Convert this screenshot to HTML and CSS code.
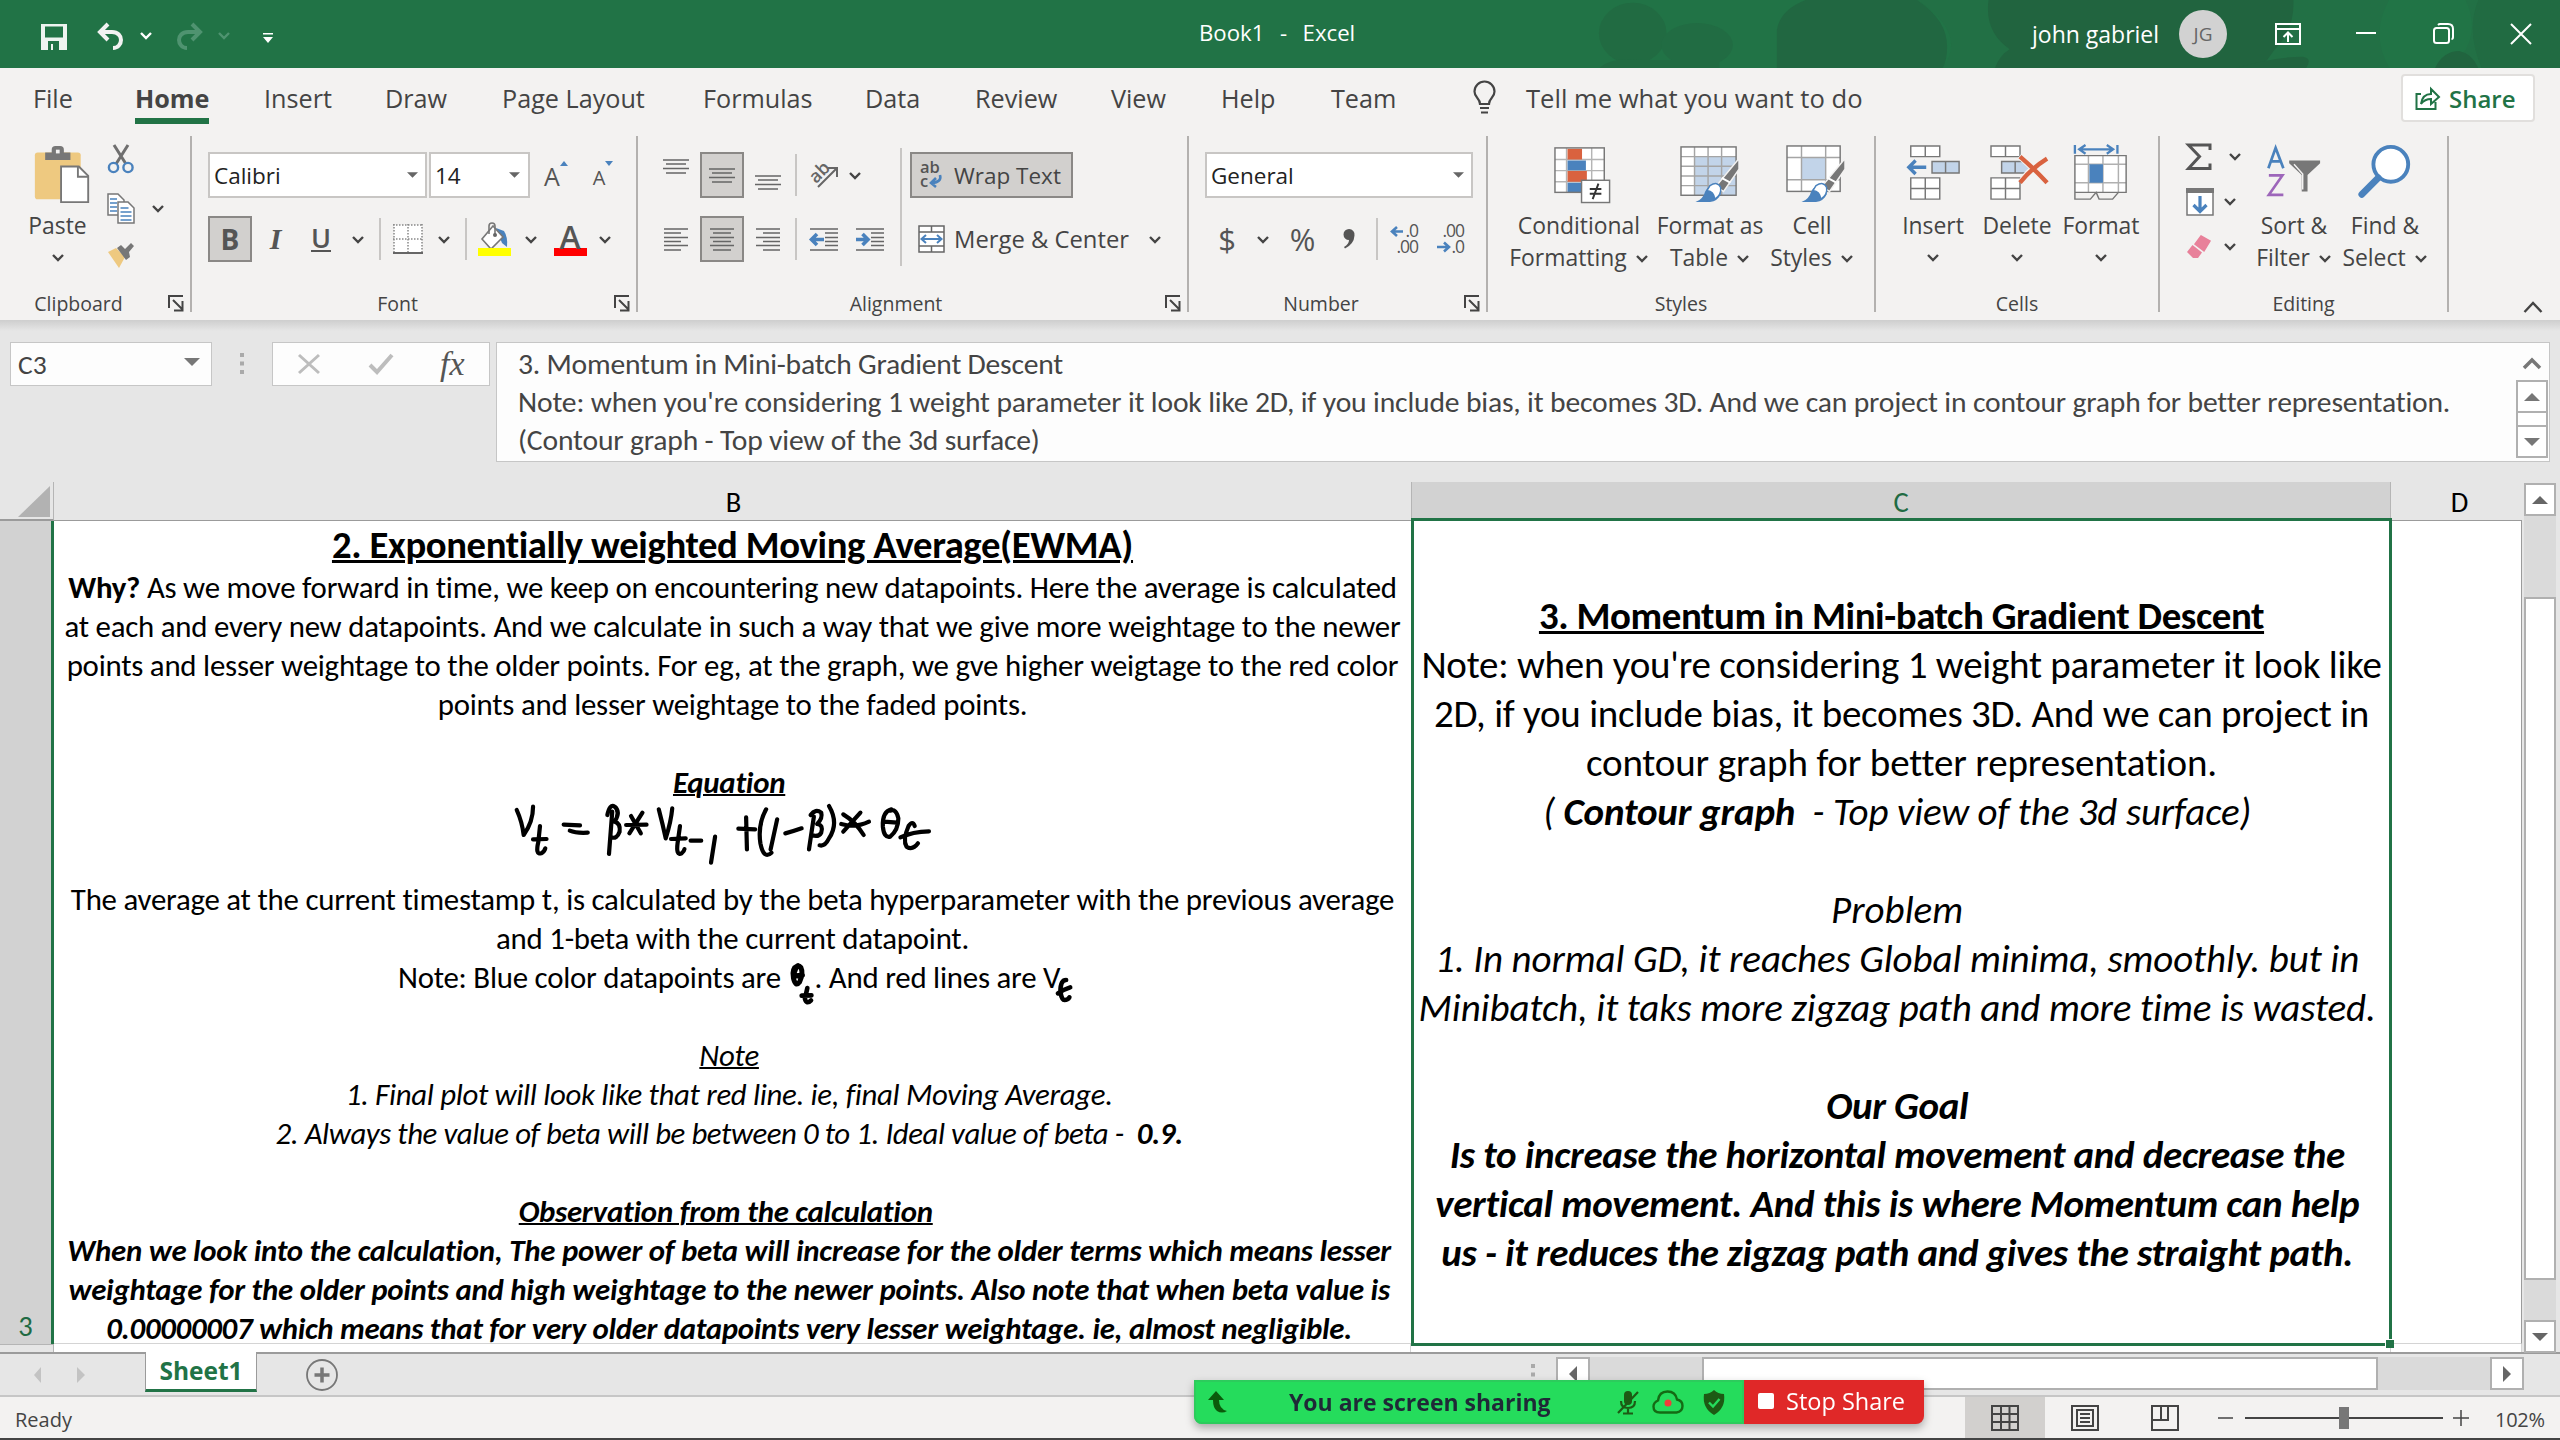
FILE: index.html
```html
<!DOCTYPE html>
<html lang="en">
<head>
<meta charset="utf-8">
<title>Book1 - Excel</title>
<link rel="stylesheet" href="styles.css">
</head>
<body>
<svg class="defs" width="0" height="0" aria-hidden="true">
  <symbol id="chev" viewBox="0 0 14 9"><path d="M2 2l5 5 5-5" fill="none" stroke="currentColor" stroke-width="2.4"/></symbol>
  <symbol id="launch" viewBox="0 0 17 17"><path d="M1 13V1h14M5 5l9 9M14.500 6v9.500H6" fill="none" stroke="#444" stroke-width="2"/></symbol>
  <symbol id="tri" viewBox="0 0 12 6"><path d="M0 0h12l-6 6z" fill="#666"/></symbol>
</svg>

<header class="titlebar">
  <svg class="pattern" viewBox="0 0 1568 204" preserveAspectRatio="none">
    <rect width="1568" height="204" fill="#217346"/>
    <path d="M560 0H1568V204H600Q640 100 560 0z" fill="#227045"/>
    <ellipse cx="114" cy="100" rx="53" ry="92" fill="#216b42"/>
    <ellipse cx="215" cy="135" rx="56" ry="66" fill="#216c43"/>
    <path d="M62 204Q80 170 130 180H250V204z" fill="#216b42"/>
    <path d="M385 0H560Q607 60 607 140Q607 180 600 204H340V90Q345 30 385 0z" fill="#216741"/>
    <path d="M672 0H1150Q1152 90 1120 150L1100 204H682Q690 165 705 148Q665 95 672 0z" fill="#21643f"/>
    <path d="M1060 204Q1120 170 1165 170Q1180 175 1170 204z" fill="#21643f"/>
    <path d="M1300 0H1420Q1440 80 1420 150L1395 204H1300Q1270 100 1300 0z" fill="#217446"/>
    <path d="M1372 204Q1385 153 1410 153Q1430 160 1440 204z" fill="#21643f"/>
    <path d="M1440 0H1568V204H1445Q1420 90 1440 0z" fill="#216b42"/>
  </svg>
  <svg class="qat-save" width="26" height="26" viewBox="0 0 26 26"><path d="M0 0h26v26H0zM4 2.500v11h18v-11zM7 17v9h3v-6h2v6h6v-9z" fill="#eef4f0" fill-rule="evenodd"/></svg>
  <svg class="qat-undo" width="28" height="28" viewBox="0 0 28 28"><path d="M11 2L3 10l8 8M4 10h11c6 0 9 4 9 8s-3 8-8 8" fill="none" stroke="#f2f2f2" stroke-width="4"/></svg>
  <svg class="qat-chev" width="14" height="9"><use href="#chev"/></svg>
  <svg class="qat-redo" width="28" height="28" viewBox="0 0 28 28"><path d="M17 2l8 8-8 8M24 10H13c-6 0-9 4-9 8s3 8 8 8" fill="none" stroke="#4f9370" stroke-width="4"/></svg>
  <svg class="qat-chev dim" width="14" height="9"><use href="#chev"/></svg>
  <svg class="qat-more" width="10" height="10" viewBox="0 0 10 10"><path d="M0 0h10v1.500H0zM0 4h10l-5 6z" fill="#fff"/></svg>
  <div class="doc-title">Book1 &nbsp;-&nbsp; Excel</div>
  <div class="account">john gabriel</div>
  <div class="avatar">JG</div>
  <div class="winbtns">
    <svg width="26" height="22" viewBox="0 0 26 22"><path d="M1 1h24v20H1zM1 6h24M13 19v-9M8.500 14l4.500-4.500 4.500 4.500" fill="none" stroke="#fff" stroke-width="2"/></svg>
    <svg width="20" height="22" viewBox="0 0 20 22"><path d="M0 10h20" stroke="#fff" stroke-width="2"/></svg>
    <svg width="21" height="22" viewBox="0 0 21 22"><rect x="1" y="5" width="15" height="15" rx="2.500" fill="none" stroke="#fff" stroke-width="2"/><path d="M5 2Q6 1 7 1h8q5 0 5 5v8q0 2-1.500 2" fill="none" stroke="#fff" stroke-width="2"/></svg>
    <svg width="20" height="22" viewBox="0 0 20 22"><path d="M0 1l20 20M20 1L0 21" stroke="#fff" stroke-width="2"/></svg>
  </div>
</header>

<section class="ribbon">
  <nav class="tabs">
    <span class="tab w102">File</span><span class="tab active w129"><b>Home</b></span><span class="tab w121">Insert</span><span class="tab w117">Draw</span><span class="tab w201">Page Layout</span><span class="tab w162">Formulas</span><span class="tab w110">Data</span><span class="tab w136">Review</span><span class="tab w110">View</span><span class="tab w110">Help</span><span class="tab w142">Team</span>
    <svg class="w53" height="34" viewBox="0 0 53 34"><path d="M7 23C7 17 1.500 17 1.500 10.500a10 10 0 0 1 20 0C21.500 17 16 17 16 23zM7 27h9M8 31.500h7" fill="none" stroke="#444" stroke-width="2.200"/></svg>
    <span class="tab tell">Tell me what you want to do</span>
    <button class="share"><svg width="25" height="25" viewBox="0 0 25 25"><path d="M6 8H1.500v15h19v-7M6 18c1-7 5-10 10-10V3l8 8-8 7v-5c-4 0-7 1-10 5z" fill="none" stroke="#217346" stroke-width="2"/></svg>Share</button>
  </nav>

  <div class="groups">
    <div class="group g-clip">
      <div class="body">
        <div class="big paste">
          <svg width="58" height="62" viewBox="0 0 58 62"><rect x="0" y="8" width="49" height="50" rx="3" fill="#eec980"/><path d="M11 8h7V5q0-4 4-4h5q4 0 4 4v3h7v8H11z" fill="#777"/><rect x="22.500" y="5" width="4" height="4" fill="#f3f2f1"/><path d="M28 23h19l10 10v28H28z" fill="#fff" stroke="#777" stroke-width="2"/><path d="M46 23v11h11" fill="none" stroke="#777" stroke-width="2"/></svg>
          <span>Paste</span><svg class="chev" width="14" height="9"><use href="#chev"/></svg>
        </div>
        <div class="smalls">
          <svg width="28" height="30" viewBox="0 0 28 30"><path d="M7 1l12 19M21 1L9 20" stroke="#6f6f6f" stroke-width="3"/><circle cx="6.500" cy="23.500" r="4.600" fill="none" stroke="#4a82bd" stroke-width="2.400"/><circle cx="21" cy="23.500" r="4.600" fill="none" stroke="#4a82bd" stroke-width="2.400"/></svg>
          <svg width="28" height="31" viewBox="0 0 28 31"><path d="M1 1h10l6 6v15H1z" fill="#fff" stroke="#777" stroke-width="1.500"/><path d="M3 6h7M3 10h7M3 14h7M3 18h7" stroke="#4a82bd" stroke-width="1.500"/><path d="M11 9h10l6 6v15H11z" fill="#fff" stroke="#777" stroke-width="1.500"/><path d="M13.500 15h8M13.500 19h11M13.500 23h11M13.500 27h11" stroke="#4a82bd" stroke-width="1.500"/></svg>
          <svg width="26" height="24" viewBox="0 0 26 24"><path d="M0 8l8-4 9 9-6 11z" fill="#eec980"/><path d="M9 4l4-3 4 4 6-6 3 3-5 6 1 5-4 3z" fill="#777"/></svg>
        </div>
        <div class="clip-chev"><svg class="chev" width="14" height="9"><use href="#chev"/></svg></div>
      </div>
      <div class="glabel"><span>Clipboard</span><svg width="17" height="17"><use href="#launch"/></svg></div>
    </div>

    <div class="group g-font">
      <div class="body rows">
        <div class="row">
          <div class="combo w219">Calibri<svg width="11" height="6"><use href="#tri"/></svg></div>
          <div class="combo w101">14<svg width="11" height="6"><use href="#tri"/></svg></div>
          <div class="cell w52"><span class="grow">A</span><svg width="8" height="5" viewBox="0 0 8 5"><path d="M0 5l4-5 4 5z" fill="#4a82bd"/></svg></div>
          <div class="cell w42"><span class="shrink">A</span><svg width="8" height="5" viewBox="0 0 8 5"><path d="M0 0h8l-4 5z" fill="#4a82bd"/></svg></div>
        </div>
        <div class="row">
          <div class="cell on w44"><b class="bold">B</b></div>
          <div class="cell w47"><i class="ital">I</i></div>
          <div class="cell w44"><span class="under">U</span></div>
          <div class="cell w30"><svg class="chev" width="14" height="9"><use href="#chev"/></svg></div>
          <div class="vsep w14"></div>
          <div class="cell w42"><svg width="30" height="30" viewBox="0 0 30 30"><rect x="1" y="1" width="28" height="28" fill="#fff"/><path d="M1 0v28M29 0v28M15 0v28M0 1h30M0 15h30" stroke="#888" stroke-width="1.500" stroke-dasharray="1.500 1.500"/><path d="M0 29h30" stroke="#666" stroke-width="2"/></svg></div>
          <div class="cell w30"><svg class="chev" width="14" height="9"><use href="#chev"/></svg></div>
          <div class="vsep w14"></div>
          <div class="cell w43"><svg width="34" height="34" viewBox="0 0 34 34"><path d="M18 6l8 3q4 6 3 16l-5-4z" fill="#4a82bd"/><path d="M15 4L4 17l9 10 12-12z" fill="#fff" stroke="#777" stroke-width="1.600"/><path d="M11 12V4q0-3 3-3t3 3v9" fill="none" stroke="#777" stroke-width="1.600"/><circle cx="17" cy="13" r="2" fill="#666"/><rect x="0" y="26" width="33" height="8" fill="#ff0"/></svg></div>
          <div class="cell w29"><svg class="chev" width="14" height="9"><use href="#chev"/></svg></div>
          <div class="cell w50"><span class="acolor">A</span></div>
          <div class="cell w20"><svg class="chev" width="14" height="9"><use href="#chev"/></svg></div>
        </div>
      </div>
      <div class="glabel"><span>Font</span><svg width="17" height="17"><use href="#launch"/></svg></div>
    </div>

    <div class="group g-align">
      <div class="body">
        <div class="rows w240">
          <div class="row">
            <div class="cell w48"><svg class="up" width="26" height="15" viewBox="0 0 26 15"><path d="M0 1h26M3 5h20M0 9.500h26M3 14h20" stroke="#666" stroke-width="1.500"/></svg></div>
            <div class="cell on w44"><svg width="26" height="15" viewBox="0 0 26 15"><path d="M0 1h26M3 5h20M0 9.500h26M3 14h20" stroke="#666" stroke-width="1.500"/></svg></div>
            <div class="cell w48"><svg class="down" width="26" height="15" viewBox="0 0 26 15"><path d="M0 1h26M3 5h20M0 9.500h26M3 14h20" stroke="#666" stroke-width="1.500"/></svg></div>
            <div class="vsep w8"></div>
            <div class="cell w48"><svg width="30" height="30" viewBox="0 0 30 30"><text x="1" y="20" class="abtxt" transform="rotate(-45 9 15)">ab</text><path d="M9 27L28 8M19 8h9v9" fill="none" stroke="#666" stroke-width="2"/></svg></div>
            <div class="cell w14"><svg class="chev" width="14" height="9"><use href="#chev"/></svg></div>
          </div>
          <div class="row">
            <div class="cell w48"><svg width="24" height="23" viewBox="0 0 24 23"><path d="M0 1h24M0 5h17M0 9.500h24M0 13.500h17M0 17.500h24M0 22h17" stroke="#666" stroke-width="1.500"/></svg></div>
            <div class="cell on w44"><svg width="24" height="23" viewBox="0 0 24 23"><path d="M0 1h24M3 5h18M0 9.500h24M3 13.500h18M0 17.500h24M3 22h18" stroke="#666" stroke-width="1.500"/></svg></div>
            <div class="cell w48"><svg width="24" height="23" viewBox="0 0 24 23"><path d="M0 1h24M7 5h17M0 9.500h24M7 13.500h17M0 17.500h24M7 22h17" stroke="#666" stroke-width="1.500"/></svg></div>
            <div class="vsep w8"></div>
            <div class="cell w48"><svg width="28" height="23" viewBox="0 0 28 23"><path d="M0 1h28M15 5h13M15 9.500h13M15 13.500h13M15 17.500h13M0 22h28" stroke="#666" stroke-width="1.500"/><path d="M14 11.500H3M7 6l-5.500 5.500L7 17" fill="none" stroke="#4a82bd" stroke-width="3.600"/></svg></div>
            <div class="cell w44"><svg width="28" height="23" viewBox="0 0 28 23"><path d="M0 1h28M15 5h13M15 9.500h13M15 13.500h13M15 17.500h13M0 22h28" stroke="#666" stroke-width="1.500"/><path d="M0 11.500h11M6.500 6l5.500 5.500L6.500 17" fill="none" stroke="#4a82bd" stroke-width="3.600"/></svg></div>
          </div>
        </div>
        <div class="longsep"></div>
        <div class="rows">
          <div class="row"><div class="wrapbtn"><svg width="24" height="30" viewBox="0 0 24 30"><text x="0" y="13" class="abc">ab</text><text x="0" y="27" class="abc">c</text><path d="M20 15q2 7-8 8M16 18l-5 5 5 4" fill="none" stroke="#4a82bd" stroke-width="2.600"/></svg>Wrap Text</div></div>
          <div class="row merge"><svg width="27" height="28" viewBox="0 0 27 28"><path d="M1 1h25v26H1z" fill="#fff" stroke="#666" stroke-width="1.500"/><path d="M1 7h25M1 21h25M13.500 1v6M13.500 21v6" fill="none" stroke="#666" stroke-width="1.500"/><path d="M4 14h19M8 10l-4.500 4L8 18M19 10l4.500 4L19 18" fill="none" stroke="#4a82bd" stroke-width="2"/></svg><span>Merge &amp; Center</span><svg class="chev" width="14" height="9"><use href="#chev"/></svg></div>
        </div>
      </div>
      <div class="glabel"><span>Alignment</span><svg width="17" height="17"><use href="#launch"/></svg></div>
    </div>

    <div class="group g-num">
      <div class="body rows">
        <div class="row"><div class="combo w268">General<svg width="11" height="6"><use href="#tri"/></svg></div></div>
        <div class="row">
          <div class="cell w44"><span class="sym">$</span></div>
          <div class="cell w28"><svg class="chev" width="14" height="9"><use href="#chev"/></svg></div>
          <div class="cell w51"><span class="sym">%</span></div>
          <div class="cell w42"><svg width="12" height="20" viewBox="0 0 12 20"><path d="M6 0a5.500 5.500 0 0 1 5.500 6.500Q11 15 2 19.500L1 18q5-3 5-7A5.500 5.500 0 0 1 6 0z" fill="#555"/></svg></div>
          <div class="vsep w14"></div>
          <div class="cell w42"><svg width="30" height="30" viewBox="0 0 30 30"><text x="28" y="13" text-anchor="end" class="dec">.0</text><text x="28" y="29" text-anchor="end" class="dec">.00</text><path d="M13 7.500H3M7 3L2 7.500 7 12" fill="none" stroke="#4a82bd" stroke-width="2.600"/></svg></div>
          <div class="cell w50"><svg width="30" height="30" viewBox="0 0 30 30"><text x="28" y="13" text-anchor="end" class="dec">.00</text><text x="28" y="29" text-anchor="end" class="dec">.0</text><path d="M1 23h11M8 18.500l5 4.500-5 4.500" fill="none" stroke="#4a82bd" stroke-width="2.600"/></svg></div>
        </div>
      </div>
      <div class="glabel"><span>Number</span><svg width="17" height="17"><use href="#launch"/></svg></div>
    </div>

    <div class="group g-styles">
      <div class="body">
        <div class="big w152">
          <svg width="60" height="60" viewBox="0 0 60 60"><rect x="1" y="3" width="51" height="46" fill="#fff"/><path d="M1 15h51M1 26.500h51M1 38h51M13 3v46M39 3v46" stroke="#b5b5b5" stroke-width="1.500"/><path d="M14 4h15v11H14zM14 27h20v11H14z" fill="#d9623f"/><path d="M14 16h19v10H14zM14 39h15v10H14z" fill="#4a82bd"/><rect x="1" y="3" width="51" height="46" fill="none" stroke="#777" stroke-width="1.500"/><rect x="28.500" y="36.500" width="29" height="23" fill="#fff" stroke="#777" stroke-width="1.500"/><path d="M37 45.500h12M37 50.500h12M46 40l-6 16" stroke="#333" stroke-width="2"/></svg>
          <span>Conditional</span><span>Formatting <svg class="chev" width="14" height="9"><use href="#chev"/></svg></span>
        </div>
        <div class="big w110">
          <svg width="62" height="60" viewBox="0 0 62 60"><rect x="1" y="2" width="57" height="50" fill="#fff"/><rect x="15" y="12" width="43" height="40" fill="#c2d4e9"/><path d="M1 12h57M1 22h57M1 32h57M1 42h57M15 2v50M29 2v50M43 2v50" stroke="#a5a5a5" stroke-width="1.500"/><rect x="1" y="2" width="57" height="50" fill="none" stroke="#777" stroke-width="1.500"/><path d="M61 14L37 43l8 5 16-23z" fill="#777" stroke="#f3f2f1" stroke-width="1.500"/><path d="M43 34l9 5" stroke="#fff" stroke-width="2"/><path d="M16 59q8-3 10-11 4-7 11-6 6 2 5 9-3 7-11 8z" fill="#4a82bd"/><path d="M31 42q8-5 11 2 1 8-6 12-1-8-8-9z" fill="#fff" stroke="#4a82bd" stroke-width="1.500"/></svg>
          <span>Format as</span><span>Table <svg class="chev" width="14" height="9"><use href="#chev"/></svg></span>
        </div>
        <div class="big w94">
          <svg width="62" height="60" viewBox="0 0 62 60"><rect x="1" y="1" width="55" height="47" fill="#fff"/><rect x="16" y="13" width="25" height="23" fill="#c2d4e9"/><path d="M1 13h55M1 36h55M16 1v47M41 1v47" stroke="#a5a5a5" stroke-width="1.500"/><rect x="1" y="1" width="55" height="47" fill="none" stroke="#777" stroke-width="1.500"/><path d="M61 14L37 43l8 5 16-23z" fill="#777" stroke="#f3f2f1" stroke-width="1.500"/><path d="M43 34l9 5" stroke="#fff" stroke-width="2"/><path d="M16 59q8-3 10-11 4-7 11-6 6 2 5 9-3 7-11 8z" fill="#4a82bd"/><path d="M31 42q8-5 11 2 1 8-6 12-1-8-8-9z" fill="#fff" stroke="#4a82bd" stroke-width="1.500"/></svg>
          <span>Cell</span><span>Styles <svg class="chev" width="14" height="9"><use href="#chev"/></svg></span>
        </div>
      </div>
      <div class="glabel plain">Styles</div>
    </div>

    <div class="group g-cells">
      <div class="body">
        <div class="big w84">
          <svg width="56" height="60" viewBox="0 0 56 60"><path d="M5 1h30v11H5zM20 1v11M5 34h30v22H5zM20 34v22M5 45h30" fill="#fff" stroke="#777" stroke-width="1.500"/><path d="M27 17h28v12H27zM41 17v12" fill="#c2d4e9" stroke="#777" stroke-width="1.500"/><path d="M21 23H4M10 16l-7 7 7 7" fill="none" stroke="#4a82bd" stroke-width="3.500"/></svg>
          <span>Insert</span><svg class="chev" width="14" height="9"><use href="#chev"/></svg>
        </div>
        <div class="big del w84">
          <svg width="62" height="60" viewBox="0 0 62 60"><path d="M1 1h30v11H1zM16 1v11M1 34h30v22H1zM16 34v22M1 45h30" fill="#fff" stroke="#777" stroke-width="1.500"/><path d="M12 17h28v12H12zM26 17v12" fill="#c2d4e9" stroke="#777" stroke-width="1.500"/><path d="M31 11q14 12 28 28M60 13q-16 10-28 26" fill="none" stroke="#f3f2f1" stroke-width="8"/><path d="M31 12q14 12 28 27M59 14q-16 10-28 25" fill="none" stroke="#d9623f" stroke-width="4.500"/></svg>
          <span>Delete</span><svg class="chev" width="14" height="9"><use href="#chev"/></svg>
        </div>
        <div class="big w84">
          <svg width="56" height="60" viewBox="0 0 56 60"><path d="M1 0v9M45 0v9M6 4.500h34M12 0L5.500 4.500 12 9M34 0l6.500 4.500L34 9" fill="none" stroke="#4a82bd" stroke-width="2.400"/><rect x="1" y="11" width="53" height="38" fill="#fff"/><path d="M1 20h53M1 39h53M15 11v38M30 11v38M46 11v38" stroke="#b0b0b0" stroke-width="1.500"/><rect x="16" y="20" width="14" height="19" fill="#4a82bd"/><path d="M1 11h53v38H1zM1 49v7h16l6-7 3 7h14l6-7" fill="none" stroke="#777" stroke-width="1.500"/></svg>
          <span>Format</span><svg class="chev" width="14" height="9"><use href="#chev"/></svg>
        </div>
      </div>
      <div class="glabel plain">Cells</div>
    </div>

    <div class="group g-edit">
      <div class="body">
        <div class="smalls edit">
          <div class="pair"><svg width="26" height="28" viewBox="0 0 26 28"><path d="M24 7V2H2.500l11 11.500L2.500 25.500H24v-5" fill="none" stroke="#555" stroke-width="3"/></svg><svg class="chev far" width="14" height="9"><use href="#chev"/></svg></div>
          <div class="pair"><svg width="28" height="28" viewBox="0 0 28 28"><rect x="1" y="1" width="26" height="26" fill="#fff" stroke="#777" stroke-width="1.500"/><path d="M0 0h28v5H0z" fill="#777"/><path d="M14 8v15M7.500 17l6.500 6.500 6.500-6.500" fill="none" stroke="#4a82bd" stroke-width="3.200"/></svg><svg class="chev" width="14" height="9"><use href="#chev"/></svg></div>
          <div class="pair"><svg width="26" height="24" viewBox="0 0 26 24"><path d="M15 1l9 5-6 10-9-7z" fill="#e8819a" stroke="#e8819a" stroke-width="1.500"/><path d="M6.500 10l9.500 7.500-4 5.500H7l-6-6z" fill="#e8819a"/></svg><svg class="chev" width="14" height="9"><use href="#chev"/></svg></div>
        </div>
        <div class="big w92">
          <svg width="56" height="60" viewBox="0 0 56 60"><path d="M1.500 24L9 3l8 21M4 17h10.500" fill="none" stroke="#4a82bd" stroke-width="2.800"/><path d="M2 31.500h14L2 51.500h15" fill="none" stroke="#9d66ba" stroke-width="2.800"/><path d="M23 16h32v3L42 31v17h-6V31L23 19z" fill="#777"/><path d="M28 20l9 10v16" fill="none" stroke="#f3f2f1" stroke-width="1.500"/></svg>
          <span>Sort &amp;</span><span>Filter <svg class="chev" width="14" height="9"><use href="#chev"/></svg></span>
        </div>
        <div class="big w90">
          <svg width="56" height="60" viewBox="0 0 56 60"><circle cx="34" cy="20" r="18" fill="#fff" stroke="#4a82bd" stroke-width="4"/><path d="M21 34L4 51" stroke="#4a82bd" stroke-width="7" stroke-linecap="round"/></svg>
          <span>Find &amp;</span><span>Select <svg class="chev" width="14" height="9"><use href="#chev"/></svg></span>
        </div>
      </div>
      <div class="glabel plain">Editing</div>
    </div>
    <svg class="collapse" width="20" height="12" viewBox="0 0 20 12"><path d="M1.500 11L10 2l8.500 9" fill="none" stroke="#444" stroke-width="2.400"/></svg>
  </div>
</section>

<section class="formula">
  <div class="namebox">C3<svg width="16" height="8" viewBox="0 0 16 8"><path d="M0 0h16l-8 8z" fill="#777"/></svg></div>
  <svg class="grip" width="4" height="22" viewBox="0 0 4 22"><path d="M2 0v4M2 8.500v4M2 17v4" stroke="#aaa" stroke-width="4"/></svg>
  <div class="fx">
    <svg width="24" height="22" viewBox="0 0 24 22"><path d="M2 2l20 18M22 2L2 20" stroke="#bdbdbd" stroke-width="3"/></svg>
    <svg width="26" height="22" viewBox="0 0 26 22"><path d="M2 12l7 7L24 2" fill="none" stroke="#bdbdbd" stroke-width="4"/></svg>
    <i>fx</i>
  </div>
  <div class="fbar">
    <div class="ftext"><div class="t22">3. Momentum in Mini-batch Gradient Descent</div><div class="t16">Note: when you're considering 1 weight parameter it look like 2D, if you include bias, it becomes 3D. And we can project in contour graph for better representation.</div><div class="t16">(Contour graph - Top view of the 3d surface)</div></div>
    <div class="fctl">
      <svg width="20" height="12" viewBox="0 0 20 12"><path d="M2 11l8-8 8 8" fill="none" stroke="#777" stroke-width="3.500"/></svg>
      <div class="spin"><i><svg width="16" height="8" viewBox="0 0 16 8"><path d="M0 8h16L8 0z" fill="#777"/></svg></i><b></b><i><svg width="16" height="8" viewBox="0 0 16 8"><path d="M0 0h16L8 8z" fill="#777"/></svg></i></div>
    </div>
  </div>
</section>

<main class="book">
  <div class="sheet">
    <div class="corner"><svg width="32" height="31" viewBox="0 0 32 31"><path d="M32 0v31H0z" fill="#b2b2b2"/></svg></div>
    <div class="colh">B</div><div class="colh sel">C</div><div class="colh">D</div>
    <div class="rowh">3</div>
    <div class="cellb">
      <p class="h">2. Exponentially weighted Moving Average(EWMA)</p>
      <p><b>Why?</b> As we move forward in time, we keep on encountering new datapoints. Here the average is calculated</p>
      <p>at each and every new datapoints. And we calculate in such a way that we give more weightage to the newer</p>
      <p>points and lesser weightage to the older points. For eg, at the graph, we gve higher weigtage to the red color</p>
      <p>points and lesser weightage to the faded points.</p>
      <p class="gap1"><b><i><u>Equation</u></i></b>&nbsp;</p>
      <p class="gap2">The average at the current timestamp t, is calculated by the beta hyperparameter with the previous average</p>
      <p>and 1-beta with the current datapoint.</p>
      <p>Note: Blue color datapoints are &nbsp; &nbsp; . And red lines are V&nbsp;</p>
      <p class="gap1"><i><u>Note</u></i>&nbsp;</p>
      <p class="t33"><i>1. Final plot will look like that red line. ie, final Moving Average.</i>&nbsp;</p>
      <p class="t43"><i>2. Always the value of beta will be between 0 to 1. Ideal value of beta - &nbsp;<b>0.9.</b></i>&nbsp;</p>
      <p class="gap1"><b><i><u>Observation from the calculation</u></i></b>&nbsp;&nbsp;</p>
      <p class="t25"><b><i>When we look into the calculation, The power of beta will increase for the older terms which means lesser</i></b>&nbsp;</p>
      <p class="t25"><b><i>weightage for the older points and high weightage to the newer points. Also note that when beta value is</i></b>&nbsp;</p>
      <p class="t29"><b><i>0.00000007 which means that for very older datapoints very lesser weightage. ie, almost negligible.</i></b>&nbsp;</p>
      <svg class="ink" viewBox="0 0 1568 780" preserveAspectRatio="none">
        <path d="M90 90Q103 125 107 165Q130 125 130 80M147 138L143 185Q135 225 150 220Q158 215 160 205M130 178L163 177"/>
        <path d="M205 134L245 136M220 152Q235 160 264 158"/>
        <path d="M324 95L316 222M312 105Q318 70 330 80Q345 95 330 125Q345 130 342 155Q335 178 322 172"/>
        <path d="M398 98L366 160M370 108L394 160M358 135L408 134"/>
        <path d="M438 88Q448 135 455 175Q468 125 471 85M490 138L484 190Q480 228 494 220Q500 215 501 207M468 177L504 175M516 182L542 182M576 170L566 248"/>
        <path d="M652 112L654 208M633 146L674 148M701 88Q680 135 687 190Q695 240 714 218M728 118L712 208"/>
        <path d="M748 160Q765 155 788 145"/>
        <path d="M818 110L806 208M810 105Q822 85 836 98Q840 115 826 132Q842 135 836 158Q830 172 814 166M855 78Q880 130 855 175Q845 200 832 196"/>
        <path d="M932 98L890 155M890 103Q920 125 940 165M885 132Q920 145 953 125"/>
        <path d="M1008 88Q985 95 987 140Q990 175 1005 170Q1025 150 1025 115Q1020 85 1005 92M990 125L1022 128"/>
        <path d="M1065 138Q1060 120 1050 138Q1035 180 1045 200Q1060 212 1073 190M1030 172Q1060 155 1100 154"/>
        <path class="thick" d="M779 557Q763 565 768 595Q773 622 783 606Q793 580 786 562Q777 550 771 575M770 588L790 585"/>
        <path class="thin" d="M802 624L796 656Q800 675 811 661M788 647L812 646"/>
        <path class="thin" d="M1436 600Q1422 600 1422 635Q1425 660 1432 660Q1440 660 1444 652M1416 640Q1430 628 1446 622"/>
      </svg>
    </div>
    <div class="cellc">
      <p class="h">3. Momentum in Mini-batch Gradient Descent</p>
      <p class="t25">Note: when you're considering 1 weight parameter it look like</p>
      <p class="t25">2D, if you include bias, it becomes 3D. And we can project in</p>
      <p class="t16">contour graph for better representation.</p>
      <p class="t16"><i>( <b>Contour graph</b>&nbsp; - Top view of the 3d surface)</i>&nbsp;</p>
      <p class="gap"><i>Problem</i>&nbsp;</p>
      <p class="t10"><i>1. In normal GD, it reaches Global minima, smoothly. but in</i>&nbsp;</p>
      <p class="t10"><i>Minibatch, it taks more zigzag path and more time is wasted.</i>&nbsp;</p>
      <p class="gap t33"><b><i>Our Goal</i></b>&nbsp;</p>
      <p class="t33"><b><i>Is to increase the horizontal movement and decrease the</i></b>&nbsp;</p>
      <p class="t35"><b><i>vertical movement. And this is where Momentum can help</i></b>&nbsp;</p>
      <p class="t35"><b><i>us - it reduces the zigzag path and gives the straight path.</i></b>&nbsp;</p>
      <span class="handle"></span>
    </div>
    <div class="celld"></div>
    <div class="r4h"></div><div class="r4"></div><div class="r4"></div><div class="r4 last"></div>
  </div>
  <div class="vscroll">
    <i class="sb"><svg width="16" height="8" viewBox="0 0 16 8"><path d="M0 8h16L8 0z" fill="#666"/></svg></i>
    <div class="vthumb"></div>
    <i class="sb"><svg width="16" height="8" viewBox="0 0 16 8"><path d="M0 0h16L8 8z" fill="#666"/></svg></i>
  </div>
</main>

<section class="sheettabs">
  <svg class="navarr" width="52" height="16" viewBox="0 0 52 16"><path d="M7 0v16L0 8zM43 0v16l8-8z" fill="#c3c3c3"/></svg>
  <div class="stab">Sheet1</div>
  <svg class="addsheet" width="32" height="32" viewBox="0 0 32 32"><circle cx="16" cy="16" r="15" fill="none" stroke="#777" stroke-width="1.800"/><path d="M16 8.500v15M8.500 16h15" stroke="#777" stroke-width="3.500"/></svg>
  <svg class="hgrip" width="4" height="22" viewBox="0 0 4 22"><path d="M2 0v4M2 8.500v4M2 17v4" stroke="#aaa" stroke-width="4"/></svg>
  <div class="hscroll">
    <i class="sb"><svg width="8" height="16" viewBox="0 0 8 16"><path d="M8 0v16L0 8z" fill="#666"/></svg></i>
    <div class="hthumb"></div>
    <i class="sb"><svg width="8" height="16" viewBox="0 0 8 16"><path d="M0 0v16l8-8z" fill="#666"/></svg></i>
  </div>
</section>

<footer class="status">
  <span class="ready">Ready</span>
  <div class="view on"><svg width="28" height="26" viewBox="0 0 28 26"><path d="M1 1h26v24H1zM1 9h26M1 17h26M10 1v24M18.500 1v24" fill="none" stroke="#444" stroke-width="2"/></svg></div>
  <div class="view"><svg width="28" height="26" viewBox="0 0 28 26"><path d="M1 1h26v24H1zM6 5h16v16H6zM9 9h10M9 13h10M9 17h10" fill="none" stroke="#444" stroke-width="2"/></svg></div>
  <div class="view"><svg width="28" height="26" viewBox="0 0 28 26"><path d="M1 1h26v24H1zM1 15h16V1M10 1v14" fill="none" stroke="#444" stroke-width="2"/></svg></div>
  <svg class="zoom" width="252" height="24" viewBox="0 0 252 24"><path d="M0 12h15M235 12h16M243 4v16" stroke="#444" stroke-width="1.500"/><path d="M27 12h198" stroke="#444" stroke-width="2"/><rect x="121" y="1" width="10" height="22" fill="#777"/></svg>
  <span class="pct">102%</span>
</footer>

<div class="sharebar">
  <div class="sharing">
    <svg width="20" height="22" viewBox="0 0 20 22"><path d="M8 0l8 9h-5q0 9 8 11-5 3-10 0Q5 17 5 9H0z" fill="#0b5a0b"/></svg>
    <b>You are screen sharing</b>
    <svg class="mic" width="22" height="25" viewBox="0 0 22 25"><rect x="7" y="1" width="8" height="14" rx="4" fill="#1d5a14"/><path d="M4 11q0 7 7 7t7-7M11 18v5M6 23.500h10M21 2L1 23" fill="none" stroke="#1d5a14" stroke-width="2.200"/></svg>
    <svg class="cloud" width="32" height="25" viewBox="0 0 32 25"><path d="M8 22.500q-6.500 0-6.500-6 0-4 4.500-6 1-9 9.500-9 8 0 9.500 8 5.500 1 5.500 6.500t-6 6.500z" fill="none" stroke="#146b14" stroke-width="2.400"/><circle cx="16" cy="13" r="3.500" fill="#f33b3b"/></svg>
    <svg class="shield" width="22" height="25" viewBox="0 0 22 25"><path d="M11 0q4 4 10 4 2 14-10 21Q-1 18 1 4 7 4 11 0z" fill="#1d5a14"/><path d="M6 12.500l4 4 6.500-7.500" fill="none" stroke="#25dc5c" stroke-width="2.400"/></svg>
  </div>
  <div class="stop"><i></i>Stop Share</div>
</div>
</body>
</html>
```
FILE: styles.css
```css
* { box-sizing: border-box; }
body { margin: 0; width: 2560px; height: 1440px; overflow: hidden; position: relative; background: #e6e6e6; color: #444; font: 23px "Open Sans", "Noto Sans", sans-serif; }
svg { display: block; flex: none; overflow: visible; }
.defs { position: absolute; }
p { margin: 0; white-space: nowrap; }
i { font-style: italic; }
.w8{width:8px}.w14{width:14px}.w20{width:20px}.w28{width:28px}.w29{width:29px}.w30{width:30px}.w42{width:42px}.w43{width:43px}.w44{width:44px}.w47{width:47px}.w48{width:48px}.w50{width:50px}.w51{width:51px}.w52{width:52px}.w53{width:53px}
.w84{width:84px}.w90{width:90px}.w92{width:92px}.w94{width:94px}.w101{width:101px}.w102{width:102px}.w110{width:110px}.w117{width:117px}.w121{width:121px}.w129{width:129px}.w136{width:136px}.w142{width:142px}.w152{width:152px}.w162{width:162px}.w201{width:201px}.w219{width:219px}.w240{width:240px}.w268{width:268px}

/* title bar */
.titlebar { position: relative; display: flex; align-items: center; height: 68px; background: #217346; color: #fff; padding-left: 41px; }
.pattern { position: absolute; left: 1560px; top: 0; width: 1000px; height: 68px; }
.titlebar > :not(.pattern) { position: relative; }
.qat-save { margin-top: 5px; }
.qat-undo { margin-left: 30px; margin-top: 4px; }
.qat-chev { margin-left: 14px; margin-top: 2px; }
.qat-redo { margin-left: 22px; margin-top: 4px; }
.qat-chev.dim { color: #4f9370; }
.qat-more { margin-left: 32px; margin-top: 8px; }
.doc-title { width: 833px; margin-left: 926px; padding-bottom: 3px; font-size: 22.200px; word-spacing: 2px; white-space: nowrap; }
.account { width: 147px; font-size: 23px; white-space: nowrap; }
.avatar { width: 48px; height: 48px; border-radius: 50%; background: #d2d2d2; color: #666; font-size: 19px; line-height: 48px; text-align: center; }
.winbtns { display: flex; align-items: center; gap: 57px; margin-left: 48px; }
.winbtns svg:first-child { margin-right: -2px; }

/* ribbon */
.ribbon { height: 252px; background: #f3f2f1; }
.tabs { display: flex; align-items: center; height: 68px; padding: 0 25px 8px 33px; font-size: 25.200px; }
.tab { flex: none; white-space: nowrap; }
.tab b { display: inline-block; height: 60px; line-height: 60px; box-shadow: inset 0 -4px #f3f2f1, inset 0 -10px #217346; font-weight: 700; }
.tell { font-size: 25.600px; }
.share { display: flex; align-items: center; gap: 9px; width: 134px; height: 48px; margin-left: auto; padding: 0 0 0 12px; border: 2px solid #e1dfdd; border-radius: 4px; background: #fff; color: #217346; font: 600 24px "Open Sans", sans-serif; }
.groups { display: flex; height: 184px; }
.group { flex: none; height: 176px; border-right: 2px solid #b3b1af; }
.g-clip { width: 192px; } .g-font { width: 446px; } .g-align { width: 551px; } .g-num { width: 299px; } .g-styles { width: 388px; } .g-cells { width: 284px; } .g-edit { width: 289px; }
.body { display: flex; height: 154px; }
.rows { display: flex; flex-direction: column; padding-top: 16px; gap: 18px; }
.row { display: flex; height: 46px; align-items: center; }
.g-font .body, .g-num .body { padding-left: 16px; }
.g-align .body { padding-left: 14px; }
.g-styles .body { padding-left: 15px; }
.g-cells .body { padding-left: 15px; }
.glabel { display: flex; align-items: center; height: 27px; font-size: 19.500px; padding-right: 5px; }
.glabel span { flex: 1; text-align: center; padding-right: 11px; }
.glabel.plain { justify-content: center; padding: 0; }
.cell { display: flex; align-items: center; justify-content: center; height: 46px; flex: none; position: relative; }
.cell.on { background: #d2d0ce; border: 2px solid #8a8886; }
.vsep { height: 42px; flex: none; background: linear-gradient(#c8c6c4, #c8c6c4) center / 2px 100% no-repeat; }
.longsep { width: 18px; height: 118px; margin-top: 12px; background: linear-gradient(#c8c6c4, #c8c6c4) center / 2px 100% no-repeat; }
.combo { display: flex; align-items: center; justify-content: space-between; height: 46px; padding: 0 7px 0 4px; border: 2px solid #c8c6c4; background: #fff; color: #222; font-size: 22.500px; }
.w219 { margin-right: 2px; }
.w101 { padding-right: 8px; }
.grow, .shrink { font-size: 25px; line-height: 46px; padding-top: 2px; color: #555; font-weight: 500; }
.shrink { font-size: 20px; padding-top: 5px; }
.cell .grow + svg, .cell .shrink + svg { align-self: flex-start; margin: 9px 0 0 0; }
.bold { font-size: 28px; color: #555; }
.ital { font: italic bold 30px "Liberation Serif", serif; color: #555; }
.under { font-size: 27px; line-height: 25px; border-bottom: 2px solid #555; font-weight: 600; color: #555; margin-top: -2px; }
.acolor { font-size: 32px; font-weight: 600; color: #555; height: 31px; box-shadow: inset 0 -8px #f00; width: 33px; text-align: center; line-height: 23px; margin-top: 3px; }
.sym { font-size: 31px; color: #555; }
.up { margin-bottom: 18px; } .down { margin-top: 14px; }
.abtxt { font: 600 18px "Open Sans", sans-serif; fill: #666; }
.abc { font: 600 16.500px "Open Sans", sans-serif; fill: #555; }
.dec { font: 17.500px "Open Sans", sans-serif; fill: #555; letter-spacing: -1px; }
.wrapbtn { display: flex; align-items: center; gap: 10px; width: 163px; height: 46px; padding-left: 8px; border: 2px solid #8a8886; background: #d2d0ce; white-space: nowrap; font-size: 22.500px; }
.merge { padding-left: 8px; }
.merge span { width: 203px; padding-left: 9px; white-space: nowrap; font-size: 23.800px; }
.big { display: flex; flex-direction: column; align-items: center; flex: none; height: 137px; font-size: 22.900px; line-height: 32px; white-space: nowrap; }
.big > svg:first-child { margin: 9px 0 7px; height: 58px; }
.big span { display: flex; align-items: center; gap: 8px; }
.big > .chev { margin-top: 11px; }
.big.w152 > svg:first-child, .big.w94 > svg:first-child { margin-left: 7px; }
.big.del > svg:first-child { margin-left: 6px; }
.paste { width: 105px; padding-left: 10px; }
.paste > svg:first-child { margin-left: 8px; }
.smalls { display: flex; flex-direction: column; width: 32px; height: 144px; margin-top: -2px; }
.smalls > * { flex: 0 0 auto; margin: auto; }
.clip-chev { width: 42px; padding: 68px 0 0 14px; }
.smalls.edit { width: 69px; height: 135px; padding-left: 20px; margin: -2px 0 0; }
.pair { display: flex; align-items: center; height: 45px; margin: 0; width: 57px; }
.pair svg:first-child { margin-left: 6px; }
.pair .chev { margin-left: auto; }
.pair .far { margin-right: -5px; }
.g-edit .w92 { margin-left: 19px; }
.collapse { margin: 165px 17px 0 auto; }

/* formula bar */
.formula { display: flex; align-items: flex-start; height: 162px; padding: 22px 10px 0; background: linear-gradient(#cecece, #e6e6e6 11px); font-family: Calibri, Carlito, Lato, sans-serif; }
.namebox { display: flex; align-items: center; justify-content: space-between; width: 202px; height: 44px; padding: 0 11px 0 7px; border: 1px solid #c6c6c6; background: #fdfdfd; font-size: 27.500px; }
.namebox svg { margin-top: -4px; }
.grip { margin: 11px 0 0 28px; }
.fx { display: flex; align-items: center; width: 218px; height: 44px; margin-left: 28px; padding-left: 24px; border: 1px solid #c6c6c6; background: #fdfdfd; }
.fx svg:nth-child(2) { margin-left: 47px; }
.fx i { margin-left: 46px; font: italic 34px "Liberation Serif", serif; color: #555; }
.fbar { display: flex; justify-content: space-between; width: 2054px; height: 120px; margin-left: 6px; padding: 2px 1px 0 21px; border: 1px solid #c6c6c6; background: #fdfdfd; }
.ftext { font-size: 29.600px; line-height: 38px; white-space: nowrap; }
.fctl { display: flex; flex-direction: column; align-items: center; gap: 11px; padding-top: 12px; }
.spin { display: flex; flex-direction: column; width: 32px; height: 78px; }
.spin i { display: flex; align-items: center; justify-content: center; height: 33px; border: 2px solid #b0b0b0; background: #fff; }
.spin b { height: 12px; border: solid #b0b0b0; border-width: 0 2px; background: #fff; }

/* tracking that holds each line to its column */
.t10 { letter-spacing: -.1px; } .t16 { letter-spacing: -.16px; } .t22 { letter-spacing: -.22px; } .t25 { letter-spacing: -.25px; } .t29 { letter-spacing: -.29px; } .t33 { letter-spacing: -.33px; } .t35 { letter-spacing: -.35px; } .t43 { letter-spacing: -.43px; }

/* worksheet */
.book { display: flex; height: 870px; color: #000; font-family: Calibri, Carlito, Lato, sans-serif; }
.sheet { display: grid; grid-template: 39px 823px 8px / 54px 1357px 980px 131px; }
.corner { padding: 4px 0 0 18px; border-bottom: 2px solid #9b9b9b; border-right: 1px solid #b5b5b5; }
.colh { font-size: 28.500px; line-height: 42px; text-align: center; border-bottom: 1px solid #9b9b9b; }
.colh.sel { background: #d2d2d2; color: #1f6b43; border: solid #b5b5b5; border-width: 0 1px; }
.colh:nth-child(2) { padding-left: 2px; }
.colh:nth-child(4) { padding-left: 6px; }
.rowh { display: flex; align-items: flex-end; justify-content: center; background: #d2d2d2; border-right: 3px solid #217346; color: #1f6b43; font-size: 28.500px; line-height: 35px; }
.cellb { position: relative; padding-top: 1px; background: #fff; text-align: center; font-size: 30.850px; line-height: 39px; letter-spacing: -.23px; border-bottom: 1px solid #d4d4d4; }
.cellb .h { font-size: 38.700px; line-height: 46px; height: 46px; letter-spacing: -.38px; }
.h { font-weight: 700; text-decoration: underline; text-decoration-thickness: 2.500px; }
u { text-decoration-thickness: 2px; }
.gap1 { margin-top: 39px; } .gap2 { margin-top: 78px; }
.ink { position: absolute; left: 426px; top: 259px; width: 640px; height: 260px; fill: none; stroke: #000; stroke-width: 4.200px; stroke-linecap: round; stroke-linejoin: round; }
.ink path { vector-effect: non-scaling-stroke; }
.ink .thick { stroke-width: 5px; }
.ink .thin { stroke-width: 4.600px; }
.cellc { position: relative; margin: -3px -1px -2px 0; padding-top: 70px; background: #fff; text-align: center; font-size: 39px; line-height: 49px; border: 3px solid #217346; z-index: 1; }
.cellc .h { font-size: 38.900px; letter-spacing: -.43px; }
.gap { margin-top: 49px; }
.handle { position: absolute; right: -5px; bottom: -5px; width: 9px; height: 9px; background: #217346; border: solid #fff; border-width: 1px 0 0 1px; }
.celld, .r4 { background: #fff; border: solid #d4d4d4; border-width: 0 0 1px 0; }
.celld { border-right: 1px solid #9b9b9b; }
.r4 { border-width: 0 1px 0 0; }
.r4h { border: solid #b5b5b5; border-width: 1px 1px 0 0; }
.vscroll { display: flex; flex-direction: column; width: 32px; height: 870px; margin: 1px 0 0 2px; background: #dadada; }
.sb { display: flex; align-items: center; justify-content: center; width: 32px; height: 33px; flex: none; border: 2px solid #b0b0b0; background: #fff; }
.vthumb { height: 684px; margin: 81px 0 40px; border: 2px solid #b0b0b0; background: #fff; }

/* sheet tabs */
.sheettabs { display: flex; height: 45px; background: #e6e6e6; border-top: 2px solid #9b9b9b; border-bottom: 2px solid #c6c6c6; }
.navarr { margin: 13px 0 0 34px; }
.stab { width: 112px; height: 40px; margin: -2px 0 0 59px; border: solid #9b9b9b; border-width: 0 1px; border-bottom: 3px solid #217346; background: #fff; color: #217346; font-weight: 700; font-size: 24.500px; line-height: 38px; text-align: center; }
.addsheet { margin: 5px 0 0 49px; }
.hgrip { margin: 10px 0 0 1193px; }
.hscroll { display: flex; width: 968px; height: 33px; margin: 3px 0 0 21px; background: #dadada; }
.hscroll .sb { width: 34px; }
.hthumb { width: 676px; margin: 0 112px; border: 2px solid #b0b0b0; background: #fff; }

/* status bar */
.status { display: flex; align-items: center; height: 43px; background: #f3f2f1; border-bottom: 2px solid #444; font-size: 20px; }
.ready { width: 1950px; margin-left: 15px; padding-top: 3px; }
.view { display: flex; align-items: center; justify-content: center; width: 80px; height: 41px; }
.view.on { background: #d2d0ce; }
.zoom { margin-left: 13px; }
.pct { margin-left: 25px; padding-top: 3px; letter-spacing: -.3px; }

/* floating screen sharing bar */
.sharebar { position: absolute; left: 1194px; top: 1380px; display: flex; width: 730px; height: 44px; border-radius: 0 0 8px 8px; color: #fff; filter: drop-shadow(0 4px 4px rgba(0,0,0,.3)); }
.sharing { display: flex; align-items: center; width: 550px; padding-left: 14px; border-radius: 0 0 0 8px; background: #25dc5c; box-shadow: inset 0 0 0 2px #2ccc5c; color: #1f2937; }
.sharing b { width: 327px; margin-left: 61px; font-size: 23px; white-space: nowrap; }
.mic { margin-left: 1px; } .cloud { margin-left: 13px; } .shield { margin-left: 19px; }
.stop { display: flex; align-items: center; gap: 12px; width: 180px; padding: 0 0 3px 14px; border-radius: 0 0 8px 0; background: #e02828; font-size: 23.500px; white-space: nowrap; }
.stop i { width: 16px; height: 16px; border-radius: 2px; background: #fff; }
```
